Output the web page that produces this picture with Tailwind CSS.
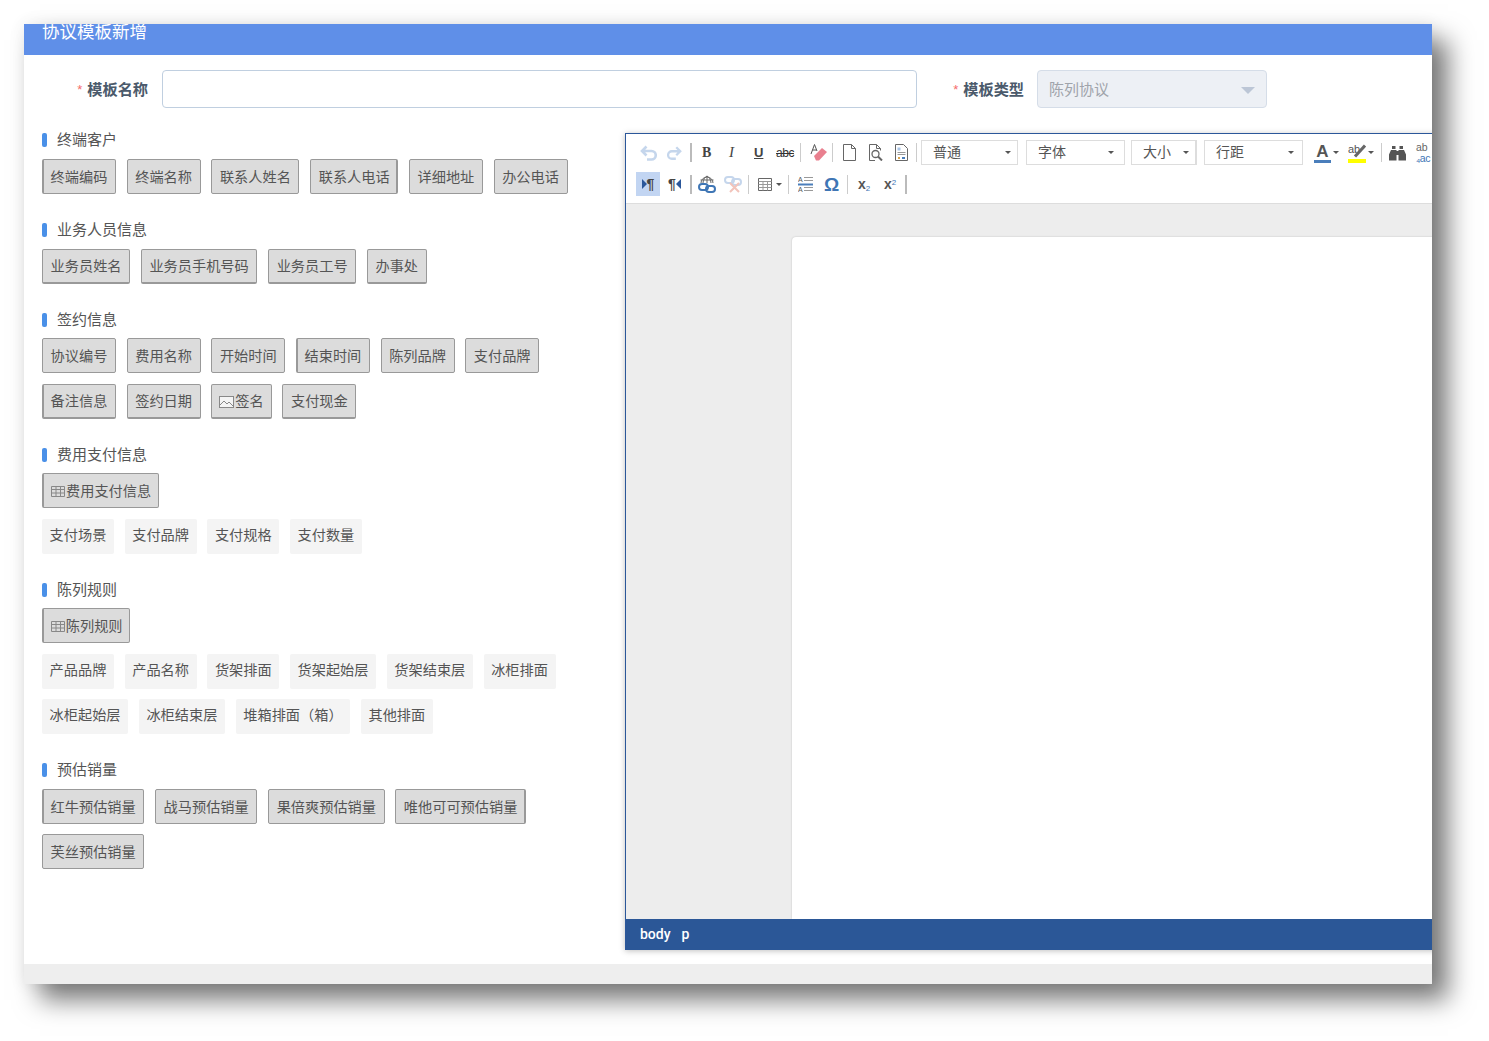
<!DOCTYPE html>
<html lang="zh-CN">
<head>
    <meta charset="UTF-8">
    <title>协议模板新增</title>
    <script src="https://cdn.jsdelivr.net/npm/@tailwindcss/browser@4"></script>
</head>
<body class="bg-white">
<div class="w-[1489px] h-[1041px] pt-[24px] pl-[24px] overflow-hidden font-['Liberation_Sans','Noto_Sans_CJK_SC',sans-serif]">
    <div class="w-[1408px] h-[960px] bg-white flex flex-col overflow-hidden shadow-[16px_16px_24px_rgba(0,0,0,.52),0_0_16px_rgba(0,0,0,.08)]">
        <!-- Header -->
        <div class="h-[31px] shrink-0 bg-[#5f8fe8] pl-[18px] text-white text-[17.5px] leading-[16px]">协议模板新增</div>

        <!-- Form row -->
        <div class="flex items-center mt-[15px] h-[38px] shrink-0">
            <label class="w-[124px] pt-[2px] flex justify-end items-center gap-[5px] text-[15.2px] font-bold text-[#4b5a6b]"><span class="text-[#f56c6c] text-[13px] font-normal">*</span>模板名称</label>
            <input type="text" class="ml-[14px] w-[755px] h-[38px] border border-[#c0cfe0] rounded-[4px] bg-white">
            <label class="w-[107px] pt-[2px] flex justify-end items-center gap-[5px] text-[15.2px] font-bold text-[#4b5a6b]"><span class="text-[#f56c6c] text-[13px] font-normal">*</span>模板类型</label>
            <div class="ml-[13px] w-[230px] h-[38px] border border-[#d5dde8] rounded-[4px] bg-[#edf0f5] flex items-center justify-between pt-[2px] pl-[11px] pr-[11px] text-[15px] text-[#a0a4ab]">
                陈列协议
                <span class="w-0 h-0 border-x-[7px] border-x-transparent border-t-[7px] border-t-[#bcc6d6]"></span>
            </div>
        </div>

        <!-- Body -->
        <div class="flex mt-[25px] h-[817px] shrink-0">
            <!-- Left column -->
            <div class="w-[601px] shrink-0 pl-[18px] text-[14.2px] text-[#555]">
                <div class="flex items-center h-[14px] mb-[12px] text-[15px]"><span class="w-[5px] h-[14px] rounded-[2px] bg-[#4a90e8] mr-[10px]"></span><span>终端客户</span></div>
                <div class="flex gap-[10.7px]">
                    <button class="h-[35px] pt-[2px] pl-[6.600px] pr-[7.600px] border border-l-2 border-[#999] rounded-[2px] bg-[#dcdcdc] whitespace-nowrap">终端编码</button>
                    <button class="h-[35px] pt-[2px] px-[7.600px] border border-[#999] rounded-[2px] bg-[#dcdcdc] whitespace-nowrap">终端名称</button>
                    <button class="h-[35px] pt-[2px] px-[7.600px] border border-[#999] rounded-[2px] bg-[#dcdcdc] whitespace-nowrap">联系人姓名</button>
                    <button class="h-[35px] pt-[2px] pl-[7.600px] pr-[6.600px] border border-r-2 border-[#999] rounded-[2px] bg-[#dcdcdc] whitespace-nowrap">联系人电话</button>
                    <button class="h-[35px] pt-[2px] px-[7.600px] border border-[#999] rounded-[2px] bg-[#dcdcdc] whitespace-nowrap">详细地址</button>
                    <button class="h-[35px] pt-[2px] px-[7.600px] border border-[#999] rounded-[2px] bg-[#dcdcdc] whitespace-nowrap">办公电话</button>
                </div>

                <div class="flex items-center h-[14px] mt-[29px] mb-[12px] text-[15px]"><span class="w-[5px] h-[14px] rounded-[2px] bg-[#4a90e8] mr-[10px]"></span><span>业务人员信息</span></div>
                <div class="flex gap-[10.7px]">
                    <button class="h-[35px] pt-[2px] px-[7.600px] border border-b-2 border-[#999] rounded-[2px] bg-[#dcdcdc] whitespace-nowrap">业务员姓名</button>
                    <button class="h-[35px] pt-[2px] px-[7.600px] border border-b-2 border-[#999] rounded-[2px] bg-[#dcdcdc] whitespace-nowrap">业务员手机号码</button>
                    <button class="h-[35px] pt-[2px] px-[7.600px] border border-b-2 border-[#999] rounded-[2px] bg-[#dcdcdc] whitespace-nowrap">业务员工号</button>
                    <button class="h-[35px] pt-[2px] px-[7.600px] border border-b-2 border-[#999] rounded-[2px] bg-[#dcdcdc] whitespace-nowrap">办事处</button>
                </div>

                <div class="flex items-center h-[14px] mt-[29px] mb-[11px] text-[15px]"><span class="w-[5px] h-[14px] rounded-[2px] bg-[#4a90e8] mr-[10px]"></span><span>签约信息</span></div>
                <div class="flex gap-[10.7px]">
                    <button class="h-[35px] pt-[2px] px-[7.600px] border border-[#999] rounded-[2px] bg-[#dcdcdc] whitespace-nowrap">协议编号</button>
                    <button class="h-[35px] pt-[2px] px-[7.600px] border border-[#999] rounded-[2px] bg-[#dcdcdc] whitespace-nowrap">费用名称</button>
                    <button class="h-[35px] pt-[2px] px-[7.600px] border border-[#999] rounded-[2px] bg-[#dcdcdc] whitespace-nowrap">开始时间</button>
                    <button class="h-[35px] pt-[2px] pl-[6.600px] pr-[7.600px] border border-l-2 border-[#999] rounded-[2px] bg-[#dcdcdc] whitespace-nowrap">结束时间</button>
                    <button class="h-[35px] pt-[2px] px-[7.600px] border border-[#999] rounded-[2px] bg-[#dcdcdc] whitespace-nowrap">陈列品牌</button>
                    <button class="h-[35px] pt-[2px] px-[7.600px] border border-[#999] rounded-[2px] bg-[#dcdcdc] whitespace-nowrap">支付品牌</button>
                </div>
                <div class="flex gap-[10.7px] mt-[11px]">
                    <button class="h-[35px] pt-[2px] pl-[6.600px] pr-[7.600px] border border-b-2 border-l-2 border-[#999] rounded-[2px] bg-[#dcdcdc] whitespace-nowrap">备注信息</button>
                    <button class="h-[35px] pt-[2px] px-[7.600px] border border-b-2 border-[#999] rounded-[2px] bg-[#dcdcdc] whitespace-nowrap">签约日期</button>
                    <button class="h-[35px] pt-[2px] px-[7px] border border-b-2 border-[#999] rounded-[2px] bg-[#dcdcdc] whitespace-nowrap flex items-center">
                        <svg class="w-[15px] h-[12px] mr-[1px]" viewBox="0 0 15 12" fill="none" stroke="#888"><rect x=".5" y=".5" width="14" height="11" fill="#f4f4f4"/><path d="M1 9l4-4 3 3 2-2 4 4"/></svg>签名
                    </button>
                    <button class="h-[35px] pt-[2px] px-[7.600px] border border-b-2 border-[#999] rounded-[2px] bg-[#dcdcdc] whitespace-nowrap">支付现金</button>
                </div>

                <div class="flex items-center h-[14px] mt-[29px] mb-[11px] text-[15px]"><span class="w-[5px] h-[14px] rounded-[2px] bg-[#4a90e8] mr-[10px]"></span><span>费用支付信息</span></div>
                <div class="flex">
                    <button class="h-[35px] pt-[2px] px-[7px] border border-l-2 border-[#999] rounded-[2px] bg-[#dcdcdc] whitespace-nowrap flex items-center">
                        <svg class="w-[14px] h-[11px] mr-[1px]" viewBox="0 0 14 11" fill="none" stroke="#888"><path d="M.5.5h13v10H.5zM.5 3.5h13M.5 7h13M5 .5v10M9.500 .5v10"/></svg>费用支付信息
                    </button>
                </div>
                <div class="flex gap-[10.7px] mt-[11px]">
                    <span class="h-[35px] px-[7.600px] leading-[33px] rounded-[2px] bg-[#f4f4f4] whitespace-nowrap">支付场景</span>
                    <span class="h-[35px] px-[7.600px] leading-[33px] rounded-[2px] bg-[#f4f4f4] whitespace-nowrap">支付品牌</span>
                    <span class="h-[35px] px-[7.600px] leading-[33px] rounded-[2px] bg-[#f4f4f4] whitespace-nowrap">支付规格</span>
                    <span class="h-[35px] px-[7.600px] leading-[33px] rounded-[2px] bg-[#f4f4f4] whitespace-nowrap">支付数量</span>
                </div>

                <div class="flex items-center h-[14px] mt-[29px] mb-[11px] text-[15px]"><span class="w-[5px] h-[14px] rounded-[2px] bg-[#4a90e8] mr-[10px]"></span><span>陈列规则</span></div>
                <div class="flex">
                    <button class="h-[35px] pt-[2px] px-[6.800px] border border-l-2 border-[#999] rounded-[2px] bg-[#dcdcdc] whitespace-nowrap flex items-center">
                        <svg class="w-[14px] h-[11px] mr-[1px]" viewBox="0 0 14 11" fill="none" stroke="#888"><path d="M.5.5h13v10H.5zM.5 3.5h13M.5 7h13M5 .5v10M9.500 .5v10"/></svg>陈列规则
                    </button>
                </div>
                <div class="flex gap-[10.7px] mt-[11px]">
                    <span class="h-[35px] px-[7.600px] leading-[33px] rounded-[2px] bg-[#f4f4f4] whitespace-nowrap">产品品牌</span>
                    <span class="h-[35px] px-[7.600px] leading-[33px] rounded-[2px] bg-[#f4f4f4] whitespace-nowrap">产品名称</span>
                    <span class="h-[35px] px-[7.600px] leading-[33px] rounded-[2px] bg-[#f4f4f4] whitespace-nowrap">货架排面</span>
                    <span class="h-[35px] px-[7.600px] leading-[33px] rounded-[2px] bg-[#f4f4f4] whitespace-nowrap">货架起始层</span>
                    <span class="h-[35px] px-[7.600px] leading-[33px] rounded-[2px] bg-[#f4f4f4] whitespace-nowrap">货架结束层</span>
                    <span class="h-[35px] px-[7.600px] leading-[33px] rounded-[2px] bg-[#f4f4f4] whitespace-nowrap">冰柜排面</span>
                </div>
                <div class="flex gap-[10.7px] mt-[10px]">
                    <span class="h-[35px] px-[7.600px] leading-[33px] rounded-[2px] bg-[#f4f4f4] whitespace-nowrap">冰柜起始层</span>
                    <span class="h-[35px] px-[7.600px] leading-[33px] rounded-[2px] bg-[#f4f4f4] whitespace-nowrap">冰柜结束层</span>
                    <span class="h-[35px] px-[7.600px] leading-[33px] rounded-[2px] bg-[#f4f4f4] whitespace-nowrap">堆箱排面（箱）</span>
                    <span class="h-[35px] px-[7.600px] leading-[33px] rounded-[2px] bg-[#f4f4f4] whitespace-nowrap">其他排面</span>
                </div>

                <div class="flex items-center h-[14px] mt-[29px] mb-[12px] text-[15px]"><span class="w-[5px] h-[14px] rounded-[2px] bg-[#4a90e8] mr-[10px]"></span><span>预估销量</span></div>
                <div class="flex gap-[10.7px]">
                    <button class="h-[35px] pt-[2px] pl-[6.600px] pr-[7.600px] border border-l-2 border-[#999] rounded-[2px] bg-[#dcdcdc] whitespace-nowrap">红牛预估销量</button>
                    <button class="h-[35px] pt-[2px] px-[7.600px] border border-[#999] rounded-[2px] bg-[#dcdcdc] whitespace-nowrap">战马预估销量</button>
                    <button class="h-[35px] pt-[2px] px-[7.600px] border border-[#999] rounded-[2px] bg-[#dcdcdc] whitespace-nowrap">果倍爽预估销量</button>
                    <button class="h-[35px] pt-[2px] pl-[7.600px] pr-[6.600px] border border-r-2 border-[#999] rounded-[2px] bg-[#dcdcdc] whitespace-nowrap">唯他可可预估销量</button>
                </div>
                <div class="flex mt-[10px]">
                    <button class="h-[35px] pt-[2px] px-[7.600px] border border-[#999] rounded-[2px] bg-[#dcdcdc] whitespace-nowrap">芙丝预估销量</button>
                </div>
            </div>

            <!-- Editor -->
            <div class="w-[900px] shrink-0 flex flex-col border-l border-t border-[#2b579a] shadow-[0_1px_6px_rgba(0,0,0,.25)]">
                <div class="shrink-0 bg-white pt-[6px] pb-[7px] border-b border-[#ddd] text-[#555]">
                    <div class="flex items-center h-[25px] whitespace-nowrap">
                        <svg class="ml-[14px] w-[17px] h-[16px]" viewBox="0 0 17 16" fill="none" stroke="#c5d6ec" stroke-width="2.6"><path d="M6.500 1.500L2 6l4.500 4.500M2 6h9.500a4 4 0 0 1 0 8.500H7"/></svg>
                        <svg class="ml-[10px] w-[15px] h-[16px]" viewBox="0 0 17 16" fill="none" stroke="#c5d6ec" stroke-width="2.6"><path d="M10.500 1.500L15 6l-4.500 4.500M15 6H5.500a4 4 0 0 0 0 8.500H10"/></svg>
                        <span class="ml-[8px] w-[2px] h-[19px] bg-[#bbb]"></span>
                        <span class="ml-[10px] w-[8px] text-[14px] font-bold text-center text-[#444] font-['Liberation_Serif',serif]">B</span>
                        <span class="ml-[18px] w-[7px] text-[15px] italic text-center font-['Liberation_Serif',serif] text-[#444]">I</span>
                        <span class="ml-[19px] w-[8px] text-[13px] font-bold text-center underline text-[#444]">U</span>
                        <span class="ml-[14px] w-[18px] text-[12px] tracking-[-0.5px] text-center line-through text-[#333]">abc</span>
                        <span class="ml-[6px] w-px h-[19px] bg-[#ccc]"></span>
                        <svg class="ml-[9px] w-[17px] h-[19px]" viewBox="0 0 17 19"><path d="M4 13l8-8 5 4-8 8.500H6z" fill="#e9808f"/><path d="M1 11L4.500 1.500 7 8M2.500 7h4" fill="none" stroke="#555"/></svg>
                        <span class="ml-[5px] w-px h-[19px] bg-[#ccc]"></span>
                        <svg class="ml-[10px] w-[13px] h-[17px]" viewBox="0 0 13 17" fill="#fff" stroke="#666"><path d="M.5.5h8l4 4v12H.5zM8.500.5v4h4"/></svg>
                        <svg class="ml-[13px] w-[14px] h-[17px]" viewBox="0 0 14 17" fill="none" stroke="#666"><path d="M6 16.500H.5V.5h7l4 4v2M7.500.5v4h4"/><circle cx="6.500" cy="10" r="3.500" stroke-width="1.300"/><path d="M9 12.500l4 4" stroke-width="2"/></svg>
                        <svg class="ml-[12px] w-[13px] h-[17px]" viewBox="0 0 13 17" fill="none" stroke="#666"><path d="M.5.500h8l4 4v12H.5z"/><path d="M2.500 3.500h3v3h-3z" fill="#a9c4e6" stroke="none"/><path d="M2.500 8.500h8M2.500 10.500h8" stroke="#999"/><path d="M3 14h2" stroke="#d9a44e" stroke-width="2"/><path d="M7 14h3" stroke="#4a7ebb" stroke-width="2"/></svg>
                        <span class="ml-[8px] w-px h-[19px] bg-[#ccc]"></span>
                        <div class="ml-[4px] w-[97px] h-[25px] border border-[#ddd] flex items-center justify-between pl-[11px] pr-[6px] text-[14px]">普通<span class="w-0 h-0 border-x-[3px] border-x-transparent border-t-[3px] border-t-[#555]"></span></div>
                        <div class="ml-[8px] w-[99px] h-[25px] border border-[#ddd] flex items-center justify-between pl-[11px] pr-[10px] text-[14px]">字体<span class="w-0 h-0 border-x-[3px] border-x-transparent border-t-[3px] border-t-[#555]"></span></div>
                        <div class="ml-[6px] w-[66px] h-[25px] border border-r-2 border-[#ddd] flex items-center justify-between pl-[11px] pr-[6px] text-[14px]">大小<span class="w-0 h-0 border-x-[3px] border-x-transparent border-t-[3px] border-t-[#555]"></span></div>
                        <div class="ml-[7px] w-[99px] h-[25px] border border-[#ddd] flex items-center justify-between pl-[11px] pr-[8px] text-[14px]">行距<span class="w-0 h-0 border-x-[3px] border-x-transparent border-t-[3px] border-t-[#555]"></span></div>
                        <div class="ml-[11px] w-[17px] h-[20px] flex flex-col items-center justify-end">
                            <span class="text-[17px] leading-[17px] text-[#555] font-bold">A</span>
                            <span class="w-[17px] h-[3px] bg-[#4a7ebb]"></span>
                        </div>
                        <span class="ml-[2px] w-0 h-0 border-x-[3px] border-x-transparent border-t-[3px] border-t-[#555]"></span>
                        <div class="ml-[9px] w-[18px] h-[20px] flex flex-col items-center">
                            <svg class="w-[18px] h-[16px]" viewBox="0 0 18 16"><text x="0" y="10" font-size="11" fill="#555" font-family="Liberation Sans">ab</text><path d="M7 13.500l10-11" stroke="#666" stroke-width="3"/></svg>
                            <span class="w-[18px] h-[4px] bg-[#ffff00]"></span>
                        </div>
                        <span class="ml-[2px] w-0 h-0 border-x-[3px] border-x-transparent border-t-[3px] border-t-[#555]"></span>
                        <span class="ml-[7px] w-px h-[19px] bg-[#ccc]"></span>
                        <svg class="ml-[7px] w-[17px] h-[16px]" viewBox="0 0 17 16" fill="#555"><path d="M3 1h3.500v3H3zM10.500 1H14v3h-3.500zM2 5h5.500v10.500H0v-6zM9.500 5H15l2 4.500v6H9.500zM7.500 6h2v4h-2z"/></svg>
                        <div class="ml-[10px] w-[18px] h-[22px] flex flex-col text-[10.5px] leading-[11px] overflow-visible">
                            <span class="text-[#666]">ab</span>
                            <span class="text-[#3f76b5] tracking-[-0.5px]">₄ac</span>
                        </div>
                    </div>
                    <div class="flex items-center h-[24px] mt-[7px] whitespace-nowrap">
                        <span class="ml-[10px] w-[24px] h-[24px] bg-[#c2d5f2] flex items-center justify-center text-[14px] font-bold text-[#444]"><span class="w-0 h-0 border-y-[5px] border-y-transparent border-l-[5px] border-l-[#2b579a]"></span>¶</span>
                        <span class="ml-[8px] w-[13px] flex items-center text-[14px] font-bold text-[#444]">¶<span class="w-0 h-0 border-y-[5px] border-y-transparent border-r-[5px] border-r-[#2b579a]"></span></span>
                        <span class="ml-[9px] w-[2px] h-[19px] bg-[#bbb]"></span>
                        <svg class="ml-[6px] w-[18px] h-[18px]" viewBox="0 0 18 18" fill="none"><path d="M3 8a6 6 0 0 1 12 0M9 1v7M5 8c0-3 2-6 4-7 2 1 4 4 4 7M2.500 5h13" stroke="#666"/><rect x="1" y="9" width="9" height="6" rx="3" stroke="#3f76b5" stroke-width="2"/><rect x="8" y="11" width="9" height="6" rx="3" stroke="#3f76b5" stroke-width="2"/></svg>
                        <svg class="ml-[8px] w-[18px] h-[18px]" viewBox="0 0 18 18" fill="none"><rect x="1" y="2" width="9" height="6" rx="3" stroke="#c5d6ec" stroke-width="2"/><rect x="8" y="4" width="9" height="6" rx="3" stroke="#c5d6ec" stroke-width="2"/><path d="M6 8l9 9M15 8l-9 9" stroke="#f2c4bb" stroke-width="2"/></svg>
                        <span class="ml-[6px] w-px h-[19px] bg-[#ccc]"></span>
                        <svg class="ml-[9px] w-[14px] h-[13px]" viewBox="0 0 14 13" fill="none" stroke="#666"><path d="M.5.500h13v12H.500z"/><path d="M.5 3.500h13M.5 6.500h13M.5 9.500h13M5 3.500v9M9.500 3.500v9" stroke="#999"/></svg>
                        <span class="ml-[4px] w-0 h-0 border-x-[3px] border-x-transparent border-t-[3px] border-t-[#555]"></span>
                        <span class="ml-[6px] w-px h-[19px] bg-[#ccc]"></span>
                        <svg class="ml-[9px] w-[15px] h-[16px]" viewBox="0 0 15 16"><text x="0" y="6" font-size="7" fill="#555" font-family="Liberation Sans">A</text><text x="0" y="15.500" font-size="7" fill="#555" font-family="Liberation Sans">A</text><path d="M6 1.500h9M6 4.500h9M6 11.500h9M6 14.500h9" stroke="#999"/><path d="M0 8.500h15" stroke="#4a7ebb" stroke-width="2"/></svg>
                        <span class="ml-[11px] w-[15px] text-[19px] leading-[19px] font-bold text-center text-[#3f76b5]">Ω</span>
                        <span class="ml-[8px] w-px h-[19px] bg-[#ccc]"></span>
                        <span class="ml-[10px] w-[13px] text-[14px] font-bold text-[#555]">x<sub class="text-[8px] font-normal text-[#3f76b5]">2</sub></span>
                        <span class="ml-[13px] w-[13px] text-[14px] font-bold text-[#555]">x<sup class="text-[8px] font-normal text-[#3f76b5]">2</sup></span>
                        <span class="ml-[8px] w-[2px] h-[19px] bg-[#bbb]"></span>
                    </div>
                </div>

                <div class="flex-1 min-h-0 bg-[#ededed] pt-[33px] pl-[166px] overflow-hidden">
                    <div class="h-full bg-white rounded-tl-[4px] shadow-[0_0_2px_rgba(0,0,0,.2)]"></div>
                </div>

                <div class="h-[31px] shrink-0 bg-[#2b5797] text-white text-[14px] leading-[31px] pl-[14px] font-['Roboto',sans-serif] font-medium">body<span class="ml-[11px]">p</span></div>
            </div>
        </div>

        <!-- Footer strip -->
        <div class="mt-auto h-[20px] shrink-0 bg-[#eeeeee]"></div>
    </div>
</div>
</body>
</html>
